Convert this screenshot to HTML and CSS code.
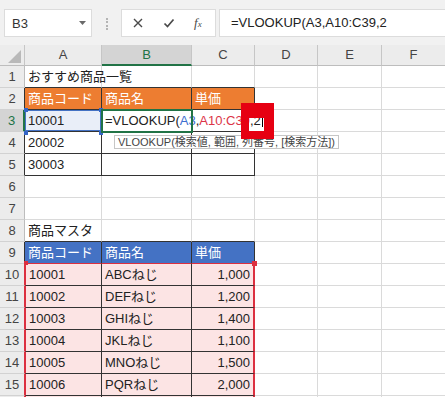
FILE: index.html
```html
<!DOCTYPE html>
<html lang="ja">
<head>
  <meta charset="UTF-8" />
  <title>VLOOKUP - Excel</title>
  <link rel="stylesheet" href="styles.css">
</head>
<body>
  <div class="toolbar">
    <div class="namebox">
      <span>B3</span>
      <svg class="drop" width="7" height="4" viewBox="0 0 7 4"><polygon points="0,0 7,0 3.5,4" fill="#6a6a6a"/></svg>
    </div>
    <span class="grip"></span>
    <div class="fbuttons">
      <svg width="12" height="12" viewBox="0 0 12 12"><path d="M2 2 L10 10 M10 2 L2 10" stroke="#4a4a4a" stroke-width="1.4" fill="none"/></svg>
      <svg width="12" height="12" viewBox="0 0 12 12"><path d="M1.5 6.5 L4.5 9.5 L10.5 2.5" stroke="#4a4a4a" stroke-width="1.7" fill="none"/></svg>
      <span class="fx"><i>f</i><small>x</small></span>
    </div>
    <div class="formula">=VLOOKUP(A3,A10:C39,2</div>
  </div>

  <div class="sheet">
    <!-- column headings -->
    <div class="corner"><svg width="25" height="21" viewBox="0 0 25 21"><polygon points="21,5 21,18 8,18" fill="#b9b9b9"/></svg></div>
    <div class="col">A</div>
    <div class="col sel">B</div>
    <div class="col">C</div>
    <div class="col">D</div>
    <div class="col">E</div>
    <div class="col">F</div>

    <!-- 1 -->
    <div class="row">1</div>
    <div class="edge-b">おすすめ商品一覧</div>
    <div class="edge-b"></div>
    <div class="edge-b"></div>
    <div></div><div></div><div></div>

    <!-- 2 -->
    <div class="row edge-r">2</div>
    <div class="tb orange">商品コード</div>
    <div class="tb orange">商品名</div>
    <div class="tb orange">単価</div>
    <div></div><div></div><div></div>

    <!-- 3 -->
    <div class="row sel">3</div>
    <div class="tb ref">10001</div>
    <div class="tb editing"><span class="editor">=VLOOKUP(<span class="r1">A3</span>,<span class="r2">A10:C39</span>,2<span class="caret"></span></span></div>
    <div class="tb mark-host"><span class="mark"></span></div>
    <div></div><div></div><div></div>

    <!-- 4 -->
    <div class="row edge-r">4</div>
    <div class="tb">20002</div>
    <div class="tb tip-host"><span class="tip">VLOOKUP(検索値, 範囲, 列番号, [検索方法])</span></div>
    <div class="tb"></div>
    <div></div><div></div><div></div>

    <!-- 5 -->
    <div class="row edge-r">5</div>
    <div class="tb">30003</div>
    <div class="tb"></div>
    <div class="tb"></div>
    <div></div><div></div><div></div>

    <!-- 6 -->
    <div class="row">6</div>
    <div></div><div></div><div></div><div></div><div></div><div></div>

    <!-- 7 -->
    <div class="row">7</div>
    <div></div><div></div><div></div><div></div><div></div><div></div>

    <!-- 8 -->
    <div class="row">8</div>
    <div class="edge-b">商品マスタ</div>
    <div class="edge-b"></div>
    <div class="edge-b"></div>
    <div></div><div></div><div></div>

    <!-- 9 -->
    <div class="row edge-r">9</div>
    <div class="tb blue rng-t">商品コード</div>
    <div class="tb blue rng-t">商品名</div>
    <div class="tb blue rng-t">単価</div>
    <div></div><div></div><div></div>

    <!-- 10 -->
    <div class="row rng">10</div>
    <div class="tb pink rng-l first">10001</div>
    <div class="tb pink">ABCねじ</div>
    <div class="tb pink num rng-r first">1,000</div>
    <div></div><div></div><div></div>

    <!-- 11 -->
    <div class="row rng">11</div>
    <div class="tb pink rng-l">10002</div>
    <div class="tb pink">DEFねじ</div>
    <div class="tb pink num rng-r">1,200</div>
    <div></div><div></div><div></div>

    <!-- 12 -->
    <div class="row rng">12</div>
    <div class="tb pink rng-l">10003</div>
    <div class="tb pink">GHIねじ</div>
    <div class="tb pink num rng-r">1,400</div>
    <div></div><div></div><div></div>

    <!-- 13 -->
    <div class="row rng">13</div>
    <div class="tb pink rng-l">10004</div>
    <div class="tb pink">JKLねじ</div>
    <div class="tb pink num rng-r">1,100</div>
    <div></div><div></div><div></div>

    <!-- 14 -->
    <div class="row rng">14</div>
    <div class="tb pink rng-l">10005</div>
    <div class="tb pink">MNOねじ</div>
    <div class="tb pink num rng-r">1,500</div>
    <div></div><div></div><div></div>

    <!-- 15 -->
    <div class="row rng">15</div>
    <div class="tb pink rng-l">10006</div>
    <div class="tb pink">PQRねじ</div>
    <div class="tb pink num rng-r">2,000</div>
    <div></div><div></div><div></div>

    <!-- 16: only its top edge is in view -->
    <div class="row rng"></div>
    <div class="tb pink rng-l"></div>
    <div class="tb pink"></div>
    <div class="tb pink rng-r"></div>
    <div></div><div></div><div></div>
  </div>
</body>
</html>
```

FILE: styles.css
```css
body {
  margin: 0;
  width: 445px;
  height: 397px;
  overflow: hidden;
  background: #fff;
  font-family: "Liberation Sans", "Noto Sans CJK JP", sans-serif;
  font-size: 13px;
  color: #222;
}

/* formula bar */
.toolbar {
  display: flex;
  align-items: flex-start;
  height: 45px;
  padding-top: 9px;
  box-sizing: border-box;
  background: #f1f1f1;
}
.namebox {
  display: flex;
  align-items: center;
  justify-content: space-between;
  width: 88px;
  height: 28px;
  margin-left: 4px;
  padding: 0 5px 0 7px;
  box-sizing: border-box;
  background: #fff;
  border: 1px solid #dcdcdc;
  color: #333;
}
.grip {
  width: 0;
  height: 12px;
  margin: 9px 13px 0 14px;
  border-left: 2px dotted #b4b4b4;
}
.fbuttons {
  display: flex;
  align-items: center;
  gap: 19px;
  width: 95px;
  height: 28px;
  padding-left: 10px;
  box-sizing: border-box;
  background: #fff;
  border: 1px solid #dcdcdc;
}
.fx {
  font-family: "Liberation Serif", serif;
  color: #4a4a4a;
  font-size: 13px;
}
.fx small {
  font-size: 9px;
  font-style: italic;
}
.formula {
  flex: 1;
  height: 28px;
  margin: 0 -2px 0 3px;
  padding-left: 11px;
  box-sizing: border-box;
  background: #fff;
  border: 1px solid #dcdcdc;
  line-height: 26px;
  color: #222;
  white-space: nowrap;
}

/* sheet grid */
.sheet {
  display: grid;
  grid-template-columns: 25px 77px 90px 63px 63px 64px 64px;
  grid-template-rows: 21px;
  grid-auto-rows: 22px;
}
.sheet > div {
  box-sizing: border-box;
  padding: 0 3px;
  border-right: 1px solid #dadada;
  border-bottom: 1px solid #dadada;
  line-height: 21px;
  white-space: nowrap;
}

.corner {
  background: #ececec;
  padding: 0 !important;
  border-right-color: #c6c6c6 !important;
  border-bottom-color: #bdbdbd !important;
}
.corner svg { display: block; }

.sheet > .col {
  background: #ececec;
  border-right-color: #c6c6c6;
  border-bottom-color: #bdbdbd;
  text-align: center;
  line-height: 20px;
  color: #444;
}
.sheet > .col.sel {
  background: #d4d4d4;
  color: #217346;
  border-bottom: 2px solid #217346;
}
.sheet > .row {
  background: #ececec;
  padding: 0;
  border-right-color: #bdbdbd;
  border-bottom-color: #d2d2d2;
  text-align: center;
  color: #444;
}
.sheet > .row.sel {
  background: #d4d4d4;
  color: #217346;
  border-right: 2px solid #217346;
}

/* cell borders */
.sheet > .edge-b { border-bottom-color: #333; }
.sheet > .row.edge-r { border-right-color: #333; }
.sheet > .tb {
  border-right-color: #333;
  border-bottom-color: #333;
}
.orange { background: #ed7d31; color: #fff; }
.blue { background: #4472c4; color: #fff; }
.pink { background: #fce4e4; }
.num { text-align: right; }

/* A10:C39 reference range */
.sheet > .rng-t { border-bottom-color: #dc3040; }
.sheet > .row.rng { border-right-color: #dc3040; }
.sheet > .rng-l { border-left: 1px solid #dc3040; }
.sheet > .rng-r { border-right: 2px solid #dc3040; }
.first { position: relative; }
.rng-l.first::before {
  content: "";
  position: absolute;
  left: -2px;
  top: -3px;
  width: 4px;
  height: 4px;
  background: #dc3040;
}
.rng-r.first::after {
  content: "";
  position: absolute;
  right: -4px;
  top: -3px;
  width: 5px;
  height: 5px;
  background: #dc3040;
}

/* A3 reference */
.ref {
  position: relative;
  background: #e9eef8;
  box-shadow: inset 0 0 0 1px #4472c4;
}
.ref::before {
  content: "";
  position: absolute;
  left: -1px;
  top: -2px;
  width: 4px;
  height: 4px;
  background: #3565c6;
  box-shadow: 75px 0 #3565c6, 0 23px #3565c6, 75px 23px #3565c6;
}

/* cell being edited */
.editing {
  position: relative;
  z-index: 2;
  outline: 2px solid #217346;
  outline-offset: -1px;
}
.editor {
  display: inline-block;
  background: #fff;
  padding-right: 4px;
  color: #222;
}
.r1 { color: #3d6fd0; }
.r2 { color: #dc3448; }
.caret {
  display: inline-block;
  width: 0;
  height: 13px;
  margin-left: 1px;
  border-left: 1px solid #000;
  vertical-align: -2px;
}

/* formula tooltip */
.tip-host { position: relative; }
.tip {
  position: absolute;
  left: 12px;
  top: 3px;
  z-index: 3;
  padding: 0 3px;
  background: #fff;
  border: 1px solid #c6c6c6;
  font-size: 11px;
  line-height: 12px;
  color: #444;
}

/* red annotation frame */
.mark-host { position: relative; }
.mark {
  position: absolute;
  left: 49px;
  top: -7px;
  z-index: 5;
  width: 15px;
  height: 13px;
  border-style: solid;
  border-color: #e60012;
  border-width: 15px 10px 8px 8px;
}
```
